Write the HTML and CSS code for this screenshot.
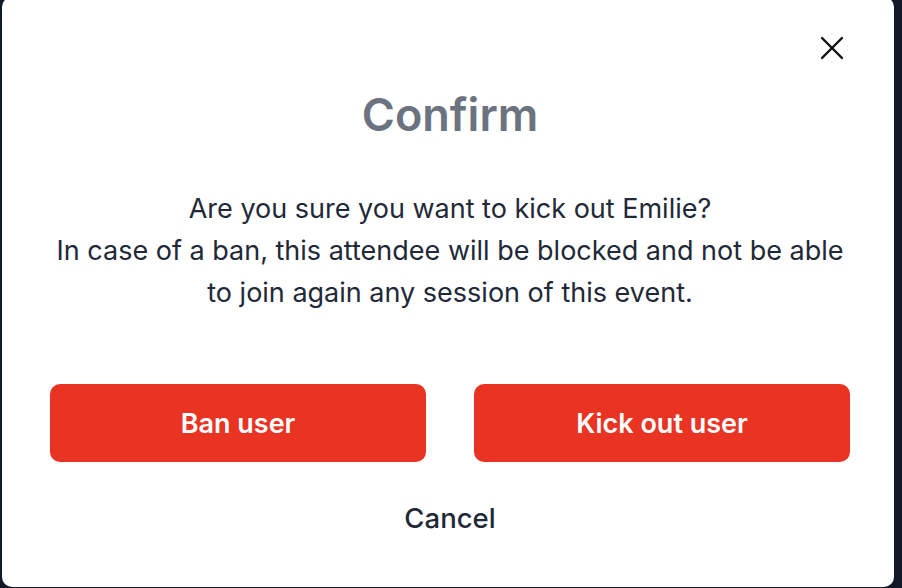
FILE: index.html
```html
<!DOCTYPE html>
<html lang="en">
<head>
<meta charset="utf-8">
<title>Confirm</title>
<link rel="stylesheet" href="styles.css">
</head>
<body>
<div class="modal">
  <button class="close" aria-label="Close">
    <svg width="24" height="24" viewBox="0 0 24 24" fill="none" stroke="#111" stroke-width="2.4" stroke-linecap="round"><path d="M2 2L22 22M22 2L2 22"/></svg>
  </button>
  <h1 class="title">Confirm</h1>
  <p class="message">Are you sure you want to kick out Emilie?<br>In case of a ban, this attendee will be blocked and not be able<br>to join again any session of this event.</p>
  <div class="actions">
    <button class="btn danger">Ban user</button>
    <button class="btn danger">Kick out user</button>
  </div>
  <button class="cancel">Cancel</button>
</div>
</body>
</html>
```
FILE: styles.css
```css
html, body {
  margin: 0;
  padding: 0;
  background: #111827;
  height: 100%;
  overflow: hidden;
}
body {
  font-family: Inter, "Noto Sans", sans-serif;
}
.modal {
  position: relative;
  box-sizing: border-box;
  width: 892px;
  height: 590px;
  margin: -3px 0 0 2px;
  background: #fff;
  border-radius: 10px;
  padding: 89px 44px 0 48px;
  display: flex;
  flex-direction: column;
  align-items: center;
}
.close {
  position: absolute;
  top: 39px;
  right: 50px;
  width: 24px;
  height: 24px;
  padding: 0;
  border: 0;
  background: none;
  display: flex;
}
.title {
  margin: 0;
  font-size: 45px;
  line-height: 58px;
  font-weight: 600;
  color: #6b7280;
}
.message {
  margin: 44px 0 0;
  font-size: 27px;
  line-height: 42px;
  color: #1f2937;
  text-align: center;
  white-space: nowrap;
}
.actions {
  margin-top: 70px;
  width: 800px;
  display: grid;
  grid-template-columns: 1fr 1fr;
  gap: 48px;
}
.btn {
  height: 78px;
  border: 0;
  border-radius: 10px;
  font-family: inherit;
  font-size: 27px;
  font-weight: 600;
  color: #fff;
}
.danger {
  background: #e93323;
}
.cancel {
  margin-top: 38px;
  border: 0;
  background: none;
  padding: 0;
  font-family: inherit;
  font-size: 27.5px;
  line-height: 36px;
  font-weight: 500;
  color: #1f2937;
}
```
